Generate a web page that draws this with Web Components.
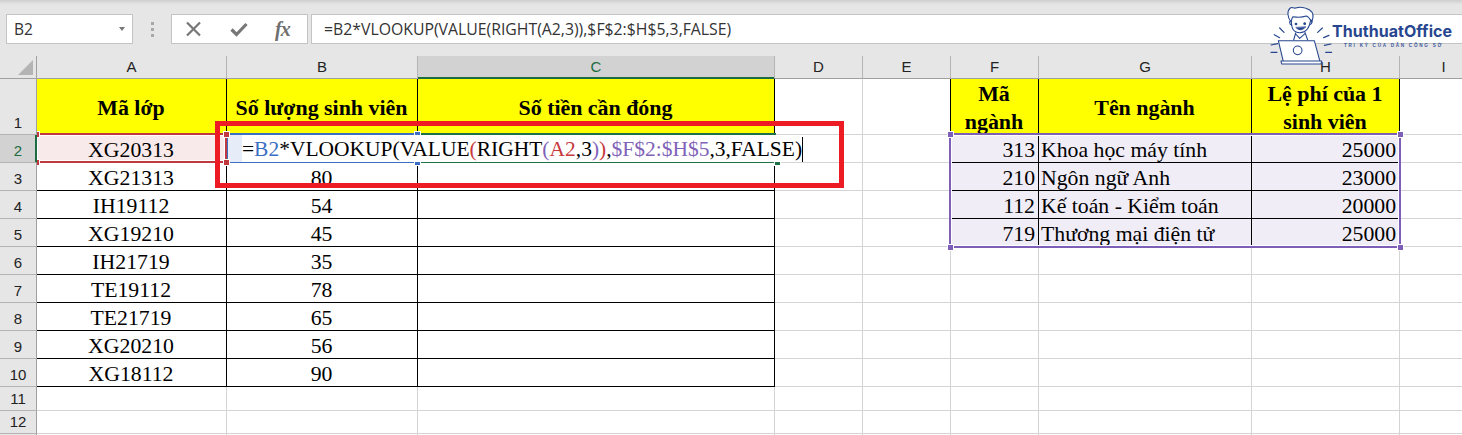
<!DOCTYPE html>
<html><head><meta charset="utf-8"><style>
html,body{margin:0;padding:0;background:#fff}
</style></head><body>
<x-app>
  <x-formula-bar name="B2" formula="=B2*VLOOKUP(VALUE(RIGHT(A2,3)),$F$2:$H$5,3,FALSE)"></x-formula-bar>
  <x-sheet></x-sheet>
  <x-logo></x-logo>
</x-app>
<script>
function shadow(el, html){ const s = el.attachShadow({mode:'open'}); s.innerHTML = html; return s; }

class XApp extends HTMLElement{
  constructor(){ super(); shadow(this, `<style>
    :host{display:flex;flex-direction:column;position:relative;overflow:hidden;background:#fff;width:1462px;height:435px}
  </style><slot></slot>`); }
}
customElements.define('x-app', XApp);

class XFormulaBar extends HTMLElement{
  connectedCallback(){
    if(this.shadowRoot) return;
    shadow(this, `<style>
      :host{display:flex;flex:none;height:56px;box-sizing:border-box;padding:14px 0 0 6px;align-items:flex-start;
        background:linear-gradient(#cfcfcf 0,#dedede 3px,#e6e6e6 5px);font-family:"Open Sans","Noto Sans",sans-serif;color:#333}
      .box{background:#fff;border:1.3px solid #c4c4c4;height:30px;box-sizing:border-box;display:flex;align-items:center}
      .name{width:127px;padding:0 7px 0 7px;justify-content:space-between;font-size:15.5px}
      .tri{width:0;height:0;border:3.5px solid transparent;border-top:4px solid #777;border-bottom:0}
      .grip{width:38px;display:flex;flex-direction:column;align-items:center;gap:3px;padding-top:8px;box-sizing:border-box;height:30px}
      .grip i{width:3px;height:3px;background:#a8a8a8;display:block}
      .btns{width:137px;padding-left:13px;box-sizing:border-box;gap:28px}
      .btns svg{display:block;flex:none}
      .fx{font:italic bold 20px "Liberation Serif",serif;color:#6f6f6f;width:20px;line-height:26px;letter-spacing:-1px;margin-left:-1px}
      .f{flex:1;margin-left:3px;padding-left:12px;border-right:0;font-size:15.8px;white-space:nowrap;color:#333}
    </style>
    <div class="box name"><span>${this.getAttribute('name')}</span><span class="tri"></span></div>
    <div class="grip"><i></i><i></i><i></i></div>
    <div class="box btns">
      <svg width="17" height="16" viewBox="0 0 17 16"><path d="M2 1.5 15 14.5M15 1.5 2 14.5" stroke="#777" stroke-width="2.2" fill="none"/></svg>
      <svg width="18" height="15" viewBox="0 0 18 15"><path d="M1.5 7.5 6.5 12.5 16.5 2" stroke="#777" stroke-width="3.2" fill="none"/></svg>
      <span class="fx">fx</span>
    </div>
    <div class="box f"><span></span></div>`);
    this.shadowRoot.querySelector('.f span').textContent = this.getAttribute('formula');
  }
}
customElements.define('x-formula-bar', XFormulaBar);

class XCell extends HTMLElement{
  constructor(){ super(); shadow(this, `<style>
    :host{display:flex;box-sizing:border-box;overflow:hidden;min-width:0;
      border-right:1px solid var(--br,#d4d4d4);border-bottom:1px solid var(--bb,#d4d4d4);
      background:var(--bg,#fff);color:var(--fg,#000);
      font:21.75px "Liberation Serif",serif;line-height:24px;
      justify-content:center;align-items:flex-end;text-align:center;padding:0 3px 0 2px}
    :host([align=right]){justify-content:flex-end}
    :host([align=left]){justify-content:flex-start}
    :host([valign=center]){align-items:center;padding-top:2px;box-sizing:border-box}
    :host([head]){font-weight:bold;font-size:21.9px;line-height:28px}
    :host([rail]){font:15px "Liberation Sans",sans-serif;line-height:22px;color:var(--fg,#222);padding:0}
  </style><div><slot></slot></div>`); }
}
customElements.define('x-cell', XCell);

class XRange extends HTMLElement{
  constructor(){ super(); shadow(this, `<style>
    :host{position:absolute;box-sizing:border-box;border:2px solid var(--c);box-shadow:inset 0 0 0 1px #fff}
    :host([open]){border-left:0;border-right:0;box-shadow:none}
    :host([noleft]){border-left:0}
    i{position:absolute;width:5px;height:5px;background:var(--c);border:1px solid #fff;display:none}
    i.tl{left:-4.5px;top:-4.5px}i.tr{right:-4.5px;top:-4.5px}i.bl{left:-4.5px;bottom:-4.5px}i.br{right:-4.5px;bottom:-4.5px}
    :host([noleft]) i.tl,:host([noleft]) i.bl{left:0;width:2px;border-left:0}
    i.on{display:block}
  </style><i class="tl"></i><i class="tr"></i><i class="bl"></i><i class="br"></i>`); }
  connectedCallback(){
    const [x,y,w,h]=this.getAttribute('rect').split(',').map(Number);
    Object.assign(this.style,{left:x+'px',top:y+'px',width:w+'px',height:h+'px'});
    this.style.setProperty('--c',this.getAttribute('color'));
    (this.getAttribute('handles')||'').split(' ').filter(Boolean).forEach(k=>this.shadowRoot.querySelector('.'+k).classList.add('on'));
  }
}
customElements.define('x-range', XRange);

class XEditor extends HTMLElement{
  constructor(){ super(); shadow(this, `<style>
    :host{position:absolute;left:228px;top:79px;width:577px;height:27px;background:#fff;display:flex;
      font:21.48px "Liberation Serif",serif;line-height:28px;color:#000;white-space:nowrap}
    .pad{width:14px;background:#e6edf8;flex:none}
    b{font-weight:normal}
    .bl{color:#3a6fc4}.rd{color:#c8383c}.pu{color:#8062b8}
    .caret{position:absolute;left:574px;top:2px;width:1px;height:25px;background:#000}
  </style><div class="pad"></div><div>=<b class="bl">B2</b>*VLOOKUP(VALUE<b class="rd">(</b>RIGHT<b class="pu">(</b><b class="rd">A2</b>,3<b class="pu">)</b><b class="rd">)</b>,<b class="pu">$F$2:$H$5</b>,3,FALSE)</div><div class="caret"></div>`); }
}
customElements.define('x-editor', XEditor);

class XCallout extends HTMLElement{
  constructor(){ super(); shadow(this, `<style>
    :host{position:absolute;left:215px;top:65px;width:629px;height:67px;box-sizing:border-box;border:5px solid #ed1c24;pointer-events:none}
  </style>`); }
}
customElements.define('x-callout', XCallout);

class XSheet extends HTMLElement{
  connectedCallback(){
    if(this.shadowRoot) return;
    const s = shadow(this, `<style>
      :host{display:block;position:relative;flex:1;min-height:0;overflow:hidden}
      .grid{display:grid;grid-template-columns:37px 190px 191px 357px 88px 88px 88px 213px 148px 88px;
        grid-template-rows:23px 56px repeat(9,28px) 24px 23px 10px;width:1488px}
      .corner{position:absolute;left:18px;top:4px;width:15px;height:15px;background:#b4b4b4;clip-path:polygon(100% 0,100% 100%,0 100%)}
    </style><div class="grid"></div><div class="corner"></div>`);
    const g = s.querySelector('.grid');
    const cols = ['', 'A','B','C','D','E','F','G','H','I'];
    const K = '#000', RAIL='#e6e6e6', RAILB='#b4b4b4', GREEN='#1d6b41', SEL='#d2d2d2';
    const left = {
      1:['Mã lớp','Số lượng sinh viên','Số tiền cần đóng'],
      2:['XG20313','',''],3:['XG21313','80',''],4:['IH19112','54',''],5:['XG19210','45',''],
      6:['IH21719','35',''],7:['TE19112','78',''],8:['TE21719','65',''],9:['XG20210','56',''],10:['XG18112','90','']
    };
    const right = {
      1:['Mã ngành','Tên ngành','Lệ phí của 1 sinh viên'],
      2:['313','Khoa học máy tính','25000'],3:['210','Ngôn ngữ Anh','23000'],
      4:['112','Kế toán - Kiểm toán','20000'],5:['719','Thương mại điện tử','25000']
    };
    const cell = (text, props={}, attrs={})=>{
      const c = document.createElement('x-cell');
      c.textContent = text;
      for(const k in props) c.style.setProperty(k, props[k]);
      for(const k in attrs) c.setAttribute(k, attrs[k]);
      g.appendChild(c);
    };
    cols.forEach((l,i)=>{
      const sel = l==='C';
      cell(l,{'--bg':sel?SEL:RAIL,'--fg':sel?GREEN:'#222','--br':i===0?'#a0a0a0':RAILB,'--bb':sel?GREEN:'#a0a0a0',
        ...(sel?{'box-shadow':'inset 0 -1px 0 '+GREEN}:{})},{rail:''});
    });
    for(let r=1;r<=13;r++){
      const sel = r===2;
      cell(r<=12?String(r):'',{'--bg':sel?SEL:RAIL,'--fg':sel?GREEN:'#222','--br':sel?GREEN:'#a0a0a0','--bb':RAILB,
        ...(sel?{'box-shadow':'inset -1px 0 0 '+GREEN}:{})},{rail:''});
      for(let c=0;c<3;c++){
        const v = left[r]; const p = {};
        if(v){ p['--br']=K; p['--bb']=K; }
        if(r===2 && c===0) p['--bg']='#f8eaea';
        if(r===1){ p['--bg']='#ffff00'; cell(v[c],p,{head:'',valign:'center'}); }
        else cell(v?v[c]:'',p);
      }
      cell('',{}); // D
      cell('',r<=5?{'--br':K}:{}); // E
      for(let c=0;c<3;c++){
        const v = right[r]; const p = {};
        if(v){ p['--br']=K; p['--bb']=K; }
        if(r===1){ p['--bg']='#ffff00'; cell(v[c],p,{head:'',valign:'center'}); }
        else if(v){ p['--bg']='#f0edf7'; cell(v[c],p,{align:c===1?'left':'right'}); }
        else cell('',p);
      }
      cell('',{}); // I
    }
    [
      ['x-range',{rect:'418,77,358,30',color:'#1f7246',open:'',handles:'br'}],
      ['x-range',{rect:'226,77,192,30',color:'#3a6fc4',handles:'tr br'}],
      ['x-editor',{}],
      ['x-range',{rect:'37,77,190,30',color:'#c0393f',noleft:'',handles:'tl tr bl br'}],
      ['x-range',{rect:'949,77,452,115',color:'#7e5fb8',handles:'tl tr bl br'}],
      ['x-callout',{}]
    ].forEach(([t,a])=>{ const e=document.createElement(t); for(const k in a) e.setAttribute(k,a[k]); s.appendChild(e); });
  }
}
customElements.define('x-sheet', XSheet);

class XLogo extends HTMLElement{
  constructor(){ super(); shadow(this, `<style>
    :host{position:absolute;left:1265px;top:0;width:197px;height:70px;display:flex;color:#27468f}
    svg{flex:none;display:block}
    .t{position:absolute;left:67px;top:21px;font:bold 16px Inter,"Open Sans",sans-serif;line-height:20px;white-space:nowrap;letter-spacing:.05px}
    .s{position:absolute;left:79px;top:43px;font:bold 4.6px "Liberation Sans",sans-serif;line-height:6px;letter-spacing:1.75px;white-space:nowrap;color:#3c5a9c}
  </style>
  <svg width="100" height="70" viewBox="0 0 300 210" fill="none" stroke="#27468f" stroke-width="3.2" stroke-linecap="round" stroke-linejoin="round">
    <path d="M78 66C66 50 66 32 76 24C80 20 86 26 92 24C104 20 122 22 134 30C146 38 146 52 140 66C136 60 132 50 124 48C112 52 96 52 84 50C80 54 80 60 78 66Z" fill="#fff"/>
    <path d="M79 62C78 78 82 98 105 98C124 98 134 80 137 60" fill="#fff"/>
    <path d="M79 62C72 62 72 74 81 75M137 60C143 60 143 72 134 74"/>
    <circle cx="93" cy="72" r="2.5" fill="#27468f"/><circle cx="119" cy="71" r="2.5" fill="#27468f"/>
    <path d="M93 83Q107 98 122 81Z" fill="#27468f" stroke-width="2"/>
    <path d="M92 99 86 120M120 97 128 120M92 102 104 115 120 101"/>
    <path d="M40 122H148L165 185H55Z" fill="#fff"/>
    <path d="M48 183H170L168 192H50Z" fill="#fff"/>
    <circle cx="98" cy="151" r="13"/>
    <path d="M44 84 57 97M28 104 44 113M18 135 38 131M18 157 36 157M172 84 158 97M192 106 176 113M198 132 178 136M200 157 182 157" stroke-width="3.6"/>
  </svg>
  <span class="t">ThuthuatOffice</span>
  <span class="s">TRI KỶ CỦA DÂN CÔNG SỞ</span>`); }
}
customElements.define('x-logo', XLogo);
</script>
</body></html>
